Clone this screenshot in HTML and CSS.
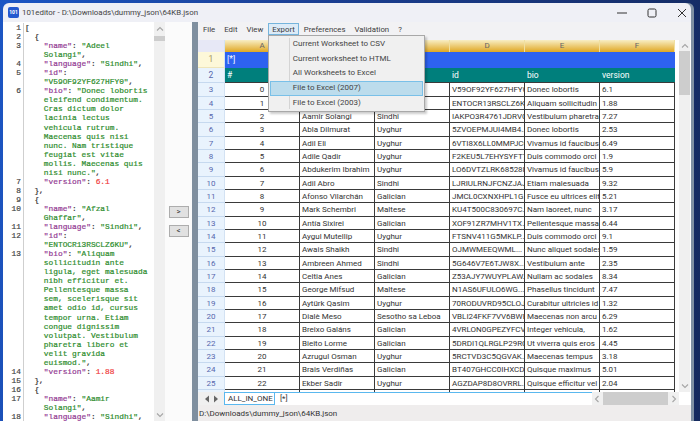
FILE: index.html
```html
<!DOCTYPE html>
<html lang="en">
<head>
    <meta charset="UTF-8">
    <title>101editor</title>
    <link rel="stylesheet" href="styles.css">
</head>
<body>
    <svg class="defs" width="0" height="0">
        <symbol id="chev-up" viewBox="0 0 8 8"><path d="M1 5.5 4 2.5 7 5.5" fill="none" stroke="#a6a6a6" stroke-width="1.1"/></symbol>
        <symbol id="chev-down" viewBox="0 0 8 8"><path d="M1 2.5 4 5.5 7 2.5" fill="none" stroke="#a6a6a6" stroke-width="1.1"/></symbol>
        <symbol id="chev-left" viewBox="0 0 8 8"><path d="M5.5 1 2.5 4 5.5 7" fill="none" stroke="#a6a6a6" stroke-width="1.1"/></symbol>
        <symbol id="chev-right" viewBox="0 0 8 8"><path d="M2.5 1 5.5 4 2.5 7" fill="none" stroke="#a6a6a6" stroke-width="1.1"/></symbol>
    </svg>

    <div class="window">
        <div class="titlebar">
            <span class="app-icon">101</span>
            <span class="title">101editor - D:\Downloads\dummy_json\64KB.json</span>
            <div class="controls">
                <svg width="10" height="10" viewBox="0 0 10 10"><path d="M0 5H10" stroke="#333" stroke-width="1"/></svg>
                <svg width="10" height="10" viewBox="0 0 10 10"><rect x="1" y="1" width="8" height="8" rx="1.5" fill="none" stroke="#333"/></svg>
                <svg width="10" height="10" viewBox="0 0 10 10"><path d="M1 1 9 9M9 1 1 9" stroke="#333" stroke-width="1"/></svg>
            </div>
        </div>

        <div class="main">
            <div class="editor">
                <pre class="gutter">1
2
3

4
5

6









7
8
9
10

11
12

13












14
15
16
17

18</pre>
                <pre class="code"><span class="p">[</span>
<span class="p">  {</span>
    <span class="k">"name"</span><span class="p">:</span> <span class="s">"Adeel</span>
    <span class="s">Solangi"</span><span class="p">,</span>
    <span class="k">"language"</span><span class="p">:</span> <span class="s">"Sindhi"</span><span class="p">,</span>
    <span class="k">"id"</span><span class="p">:</span>
    <span class="s">"V59OF92YF627HFY0"</span><span class="p">,</span>
    <span class="k">"bio"</span><span class="p">:</span> <span class="s">"Donec lobortis
    eleifend condimentum.
    Cras dictum dolor
    lacinia lectus
    vehicula rutrum.
    Maecenas quis nisi
    nunc. Nam tristique
    feugiat est vitae
    mollis. Maecenas quis
    nisi nunc."</span><span class="p">,</span>
    <span class="k">"version"</span><span class="p">:</span> <span class="n">6.1</span>
<span class="p">  },</span>
<span class="p">  {</span>
    <span class="k">"name"</span><span class="p">:</span> <span class="s">"Afzal</span>
    <span class="s">Ghaffar"</span><span class="p">,</span>
    <span class="k">"language"</span><span class="p">:</span> <span class="s">"Sindhi"</span><span class="p">,</span>
    <span class="k">"id"</span><span class="p">:</span>
    <span class="s">"ENTOCR13RSCLZ6KU"</span><span class="p">,</span>
    <span class="k">"bio"</span><span class="p">:</span> <span class="s">"Aliquam
    sollicitudin ante
    ligula, eget malesuada
    nibh efficitur et.
    Pellentesque massa
    sem, scelerisque sit
    amet odio id, cursus
    tempor urna. Etiam
    congue dignissim
    volutpat. Vestibulum
    pharetra libero et
    velit gravida
    euismod."</span><span class="p">,</span>
    <span class="k">"version"</span><span class="p">:</span> <span class="n">1.88</span>
<span class="p">  },</span>
<span class="p">  {</span>
    <span class="k">"name"</span><span class="p">:</span> <span class="s">"Aamir</span>
    <span class="s">Solangi"</span><span class="p">,</span>
    <span class="k">"language"</span><span class="p">:</span> <span class="s">"Sindhi"</span><span class="p">,</span></pre>
                <div class="vscroll editor-scroll">
                    <svg class="arrow" width="8" height="8"><use href="#chev-up"/></svg>
                    <div class="thumb"></div>
                    <svg class="arrow arrow-end" width="8" height="8"><use href="#chev-down"/></svg>
                </div>
            </div>

            <div class="transfer">
                <button class="move">&gt;</button>
                <button class="move">&lt;</button>
            </div>

            <div class="splitter"></div>

            <div class="sheet-pane">
                <div class="menubar">
                    <span class="menu-item">File</span>
                    <span class="menu-item">Edit</span>
                    <span class="menu-item">View</span>
                    <span class="menu-item menu-open">Export
                        <div class="dropdown">
                            <div class="drop-item">Current Worksheet to CSV</div>
                            <div class="drop-item">Current worksheet to HTML</div>
                            <div class="drop-item">All Worksheets to Excel</div>
                            <div class="drop-item drop-active">File to Excel (2007)</div>
                            <div class="drop-item">File to Excel (2003)</div>
                        </div>
                    </span>
                    <span class="menu-item">Preferences</span>
                    <span class="menu-item">Validation</span>
                    <span class="menu-item">?</span>
                </div>

                <div class="sheet-body">
                    <div class="grid">
                        <div class="row col-heads">
                            <div class="corner"></div>
                            <div>A</div><div>B</div><div>C</div><div>D</div><div>E</div><div>F</div>
                        </div>
                        <div class="row row-blue">
                            <div class="rh rh-current">1</div>
                            <div>[*]</div><div></div><div></div><div></div><div></div><div></div>
                        </div>
                        <div class="row row-teal">
                            <div class="rh">2</div>
                            <div>#</div><div>name</div><div>language</div><div>id</div><div>bio</div><div>version</div>
                        </div>
                        <div class="row"><div class="rh">3</div><div class="num">0</div><div>Adeel Solangi</div><div>Sindhi</div><div>V59OF92YF627HFY0</div><div>Donec lobortis</div><div>6.1</div></div>
                        <div class="row"><div class="rh">4</div><div class="num">1</div><div>Afzal Ghaffar</div><div>Sindhi</div><div>ENTOCR13RSCLZ6KU</div><div>Aliquam sollicitudin</div><div>1.88</div></div>
                        <div class="row"><div class="rh">5</div><div class="num">2</div><div>Aamir Solangi</div><div>Sindhi</div><div>IAKPO3R4761JDRVG</div><div>Vestibulum pharetra</div><div>7.27</div></div>
                        <div class="row"><div class="rh">6</div><div class="num">3</div><div>Abla Dilmurat</div><div>Uyghur</div><div>5ZVOEPMJUI4MB4...</div><div>Donec lobortis</div><div>2.53</div></div>
                        <div class="row"><div class="rh">7</div><div class="num">4</div><div>Adil Eli</div><div>Uyghur</div><div>6VTI8X6LL0MMPJCC</div><div>Vivamus id faucibus</div><div>6.49</div></div>
                        <div class="row"><div class="rh">8</div><div class="num">5</div><div>Adile Qadir</div><div>Uyghur</div><div>F2KEU5L7EHYSYFTT</div><div>Duis commodo orci</div><div>1.9</div></div>
                        <div class="row"><div class="rh">9</div><div class="num">6</div><div>Abdukerim Ibrahim</div><div>Uyghur</div><div>LO6DVTZLRK68528I</div><div>Vivamus id faucibus</div><div>5.9</div></div>
                        <div class="row"><div class="rh">10</div><div class="num">7</div><div>Adil Abro</div><div>Sindhi</div><div>LJRIULRNJFCNZJAJ</div><div>Etiam malesuada</div><div>9.32</div></div>
                        <div class="row"><div class="rh">11</div><div class="num">8</div><div>Afonso Vilarchán</div><div>Galician</div><div>JMCL0CXNXHPL1G...</div><div>Fusce eu ultrices elit</div><div>5.21</div></div>
                        <div class="row"><div class="rh">12</div><div class="num">9</div><div>Mark Schembri</div><div>Maltese</div><div>KU4T500C830697C...</div><div>Nam laoreet, nunc</div><div>3.17</div></div>
                        <div class="row"><div class="rh">13</div><div class="num">10</div><div>Antía Sixirei</div><div>Galician</div><div>XOF91ZR7MHV1TX...</div><div>Pellentesque massa</div><div>6.44</div></div>
                        <div class="row"><div class="rh">14</div><div class="num">11</div><div>Aygul Mutellip</div><div>Uyghur</div><div>FTSNV411G5MKLP...</div><div>Duis commodo orci</div><div>9.1</div></div>
                        <div class="row"><div class="rh">15</div><div class="num">12</div><div>Awais Shaikh</div><div>Sindhi</div><div>OJMWMEEQWML...</div><div>Nunc aliquet sodales</div><div>1.59</div></div>
                        <div class="row"><div class="rh">16</div><div class="num">13</div><div>Ambreen Ahmed</div><div>Sindhi</div><div>5G646V7E6TJW8X...</div><div>Vestibulum ante</div><div>2.35</div></div>
                        <div class="row"><div class="rh">17</div><div class="num">14</div><div>Celtia Anes</div><div>Galician</div><div>Z53AJY7WUYPLAW...</div><div>Nullam ac sodales</div><div>8.34</div></div>
                        <div class="row"><div class="rh">18</div><div class="num">15</div><div>George Mifsud</div><div>Maltese</div><div>N1AS6UFULO6WG...</div><div>Phasellus tincidunt</div><div>7.47</div></div>
                        <div class="row"><div class="rh">19</div><div class="num">16</div><div>Aytürk Qasim</div><div>Uyghur</div><div>70RODUVRD95CLOJI</div><div>Curabitur ultricies id</div><div>1.32</div></div>
                        <div class="row"><div class="rh">20</div><div class="num">17</div><div>Dialè Meso</div><div>Sesotho sa Leboa</div><div>VBLI24FKF7VV6BWE</div><div>Maecenas non arcu</div><div>6.29</div></div>
                        <div class="row"><div class="rh">21</div><div class="num">18</div><div>Breixo Galáns</div><div>Galician</div><div>4VRLON0GPEZYFCVL</div><div>Integer vehicula,</div><div>1.62</div></div>
                        <div class="row"><div class="rh">22</div><div class="num">19</div><div>Bieito Lorme</div><div>Galician</div><div>5DRDI1QLRGLP29RC</div><div>Ut viverra quis eros</div><div>4.45</div></div>
                        <div class="row"><div class="rh">23</div><div class="num">20</div><div>Azrugul Osman</div><div>Uyghur</div><div>5RCTVD3C5QGVAK...</div><div>Maecenas tempus</div><div>3.18</div></div>
                        <div class="row"><div class="rh">24</div><div class="num">21</div><div>Brais Verdiñas</div><div>Galician</div><div>BT407GHCC0IHXCD3</div><div>Quisque maximus</div><div>5.01</div></div>
                        <div class="row"><div class="rh">25</div><div class="num">22</div><div>Ekber Sadir</div><div>Uyghur</div><div>AGZDAP8D8OVRRL...</div><div>Quisque efficitur vel</div><div>2.04</div></div>
                        <div class="row"><div class="rh"></div><div></div><div></div><div></div><div></div><div></div><div></div></div>
                    </div>
                    <div class="vscroll sheet-scroll">
                        <svg class="arrow" width="8" height="8"><use href="#chev-up"/></svg>
                        <div class="thumb"></div>
                        <svg class="arrow arrow-end" width="8" height="8"><use href="#chev-down"/></svg>
                    </div>
                </div>

                <div class="tabbar">
                    <div class="tab-nav">
                        <svg width="6" height="8" viewBox="0 0 6 8"><path d="M5 0.5V7.5L1 4Z" fill="#666"/></svg>
                        <svg width="6" height="8" viewBox="0 0 6 8"><path d="M1 0.5V7.5L5 4Z" fill="#666"/></svg>
                    </div>
                    <div class="tabs">
                        <span class="tab tab-active">ALL_IN_ONE</span>
                        <span class="tab">[*]</span>
                    </div>
                    <div class="hscroll">
                        <svg width="8" height="8"><use href="#chev-left"/></svg>
                        <div class="hthumb"></div>
                        <svg width="8" height="8"><use href="#chev-right"/></svg>
                    </div>
                    <div class="scroll-corner"></div>
                </div>

                <div class="statusbar">D:\Downloads\dummy_json\64KB.json</div>
            </div>
        </div>
    </div>
</body>
</html>
```

FILE: styles.css
```css
* {
    margin: 0;
    padding: 0;
    box-sizing: border-box;
}

html, body {
    height: 421px;
    overflow: hidden;
}

body {
    font-family: Roboto, "Open Sans", sans-serif;
    font-size: 8px;
    color: #333;
    padding: 3px 9px 0 3px;
    background: linear-gradient(100deg, #1c56c4 0%, #1a3f94 40%, #14295e 100%);
}

.defs {
    position: absolute;
}

.window {
    height: 418px;
    display: flex;
    flex-direction: column;
    background: #eff0f6;
    border-radius: 6px 6px 0 0;
    box-shadow: 3px 0 0 #7f90a3;
    overflow: hidden;
}

/* title bar */
.titlebar {
    height: 19px;
    flex: none;
    display: flex;
    align-items: center;
    padding-left: 5px;
}

.app-icon {
    width: 11px;
    height: 11px;
    border-radius: 2px;
    background: #2459cf;
    color: white;
    font-size: 5px;
    font-weight: 700;
    line-height: 11px;
    text-align: center;
}

.title {
    margin-left: 3px;
    font-size: 7.9px;
    color: #444;
}

.controls {
    margin-left: auto;
    display: flex;
    gap: 20px;
    padding-right: 4px;
}

.main {
    flex: 1;
    display: flex;
    min-height: 0;
}

/* json editor on the left */
.editor {
    width: 162px;
    flex: none;
    display: flex;
    background: white;
    overflow: hidden;
    padding-top: 1px;
}

.gutter, .code {
    font-family: "Liberation Mono", monospace;
    font-size: 7.85px;
    line-height: 9.05px;
    -webkit-text-stroke: 0.2px;
}

.gutter {
    width: 21px;
    flex: none;
    padding-right: 2px;
    text-align: right;
    color: #444;
    border-right: 1px solid #cfcfcf;
}

.code {
    flex: 1;
    padding-left: 1px;
    color: #333;
}

.k { color: #933a93; }
.s { color: #2c8c2c; }
.n { color: #f03c3c; }
.p { color: #333; }

.vscroll {
    width: 11px;
    flex: none;
    display: flex;
    flex-direction: column;
    align-items: center;
    background: #f0f0f0;
}

.vscroll .arrow {
    flex: none;
    margin-top: 2px;
    margin-bottom: 1px;
}

.vscroll .arrow-end {
    margin-top: auto;
    margin-bottom: 2px;
}

.vscroll .thumb {
    width: 100%;
    flex: none;
    background: #cdcdcd;
}

.editor-scroll {
    margin-top: -1px;
}

.editor-scroll .arrow:first-child {
    margin-top: 3px;
    margin-bottom: 2px;
}

.editor-scroll .thumb {
    height: 5px;
    margin-top: 1px;
}

/* middle buttons */
.transfer {
    width: 27px;
    flex: none;
    display: flex;
    flex-direction: column;
    align-items: center;
    gap: 7px;
    padding-top: 184px;
    background: #fbfbfb;
}

.move {
    width: 20px;
    height: 12px;
    font-family: inherit;
    font-size: 8px;
    line-height: 10px;
    color: #333;
    background: #e1e1e1;
    border: 1px solid #adadad;
}

.splitter {
    width: 6px;
    flex: none;
    background: #7f8f9f;
}

/* right pane */
.sheet-pane {
    flex: 1;
    min-width: 0;
    display: flex;
    flex-direction: column;
    background: white;
}

.menubar {
    height: 18px;
    flex: none;
    display: flex;
    align-items: flex-start;
    padding: 1px 0 0 0.5px;
    background: #f2f2f4;
}

.menu-item {
    position: relative;
    height: 12px;
    line-height: 11px;
    padding: 0 3.5px;
    border: 1px solid transparent;
    font-size: 7.8px;
    color: #3c3c3c;
}

.menu-open {
    background: #dcebf7;
    border-color: #75b4dc;
}

.dropdown {
    position: absolute;
    top: 11px;
    left: -1px;
    width: 157px;
    height: 77px;
    padding: 1px;
    background: #f0f0f0;
    border: 1px solid #a8a8a8;
    box-shadow: 2px 2px 2px rgba(0, 0, 0, 0.2);
    z-index: 5;
}

.dropdown::before {
    content: "";
    position: absolute;
    top: 2px;
    bottom: 2px;
    left: 20px;
    border-left: 1px solid #d4d4d4;
}

.drop-item {
    position: relative;
    height: 14.7px;
    line-height: 14px;
    padding-left: 23px;
    font-size: 8px;
    color: #444;
}

.drop-active {
    background: #bcdcec;
    outline: 1px solid #79c0e8;
    outline-offset: -1px;
}

.sheet-body {
    flex: 1;
    min-height: 0;
    display: flex;
    background: white;
}

.grid {
    width: 481px;
    flex: none;
    overflow: hidden;
}

.row {
    display: grid;
    grid-template-columns: 27px repeat(6, 75px);
    height: 13.33px;
}

.row > div {
    padding-left: 2px;
    overflow: hidden;
    white-space: nowrap;
    line-height: 14px;
    color: #333;
    border-right: 1px solid #3a3a3a;
    border-bottom: 1px solid #3a3a3a;
}

.row > .num {
    padding-left: 0;
    text-align: center;
}

.row > .rh {
    padding-left: 0;
    text-align: center;
    color: #5767ad;
    background: #e9f3fd;
    border-right: 1px solid #d3e2f3;
    border-bottom: 1px solid #c6d9ef;
}

.row > .rh-current {
    color: #a59a63;
    background: #fdf8d9;
    border-bottom-color: #eee5ba;
}

.col-heads {
    height: 12px;
}

.col-heads > div {
    padding-left: 0;
    text-align: center;
    line-height: 12px;
    color: #666;
    background: linear-gradient(#f8eec4, #e0a722);
    border-bottom: 0;
    border-right: 1px solid #f0dfa0;
}

.col-heads > .corner {
    background: #e7e8f6;
    border-right: 1px solid #d3e2f3;
}

.row-blue {
    height: 16px;
}

.row-blue > div {
    color: white;
    font-size: 8.5px;
    line-height: 14px;
    background: #2e62f0;
    border: 0;
}

.row-teal {
    height: 15.3px;
}

.row-teal > div {
    color: white;
    font-size: 8.5px;
    line-height: 15px;
    background: #007f7c;
    border-right: 0;
}

.sheet-scroll .thumb {
    height: 44px;
}

/* sheet tabs */
.tabbar {
    height: 13px;
    flex: none;
    display: flex;
    align-items: stretch;
    background: white;
}

.tab-nav {
    width: 27px;
    flex: none;
    display: flex;
    align-items: center;
    gap: 3px;
    padding-left: 6px;
    background: #f0f0f0;
}

.tabs {
    flex: 1;
    display: flex;
    gap: 2px;
    border-top: 1px solid #5ab8ef;
}

.tab {
    padding: 0 3px;
    line-height: 11px;
    color: #333;
}

.tab-active {
    width: 51px;
    border-right: 1px solid #5ab8ef;
    border-bottom: 1px solid #5ab8ef;
    border-left: 1px solid #5ab8ef;
    margin-left: -1px;
    margin-top: -1px;
    padding-top: 1px;
}

.hscroll {
    width: 87px;
    flex: none;
    display: flex;
    align-items: center;
    gap: 2px;
    background: #f0f0f0;
    padding: 0 1px;
}

.hthumb {
    flex: 1;
    height: 100%;
    background: #cdcdcd;
}

.scroll-corner {
    width: 12px;
    flex: none;
}

.statusbar {
    height: 16px;
    flex: none;
    padding-left: 1px;
    line-height: 18px;
    color: #333;
    background: #efeded;
}
```
